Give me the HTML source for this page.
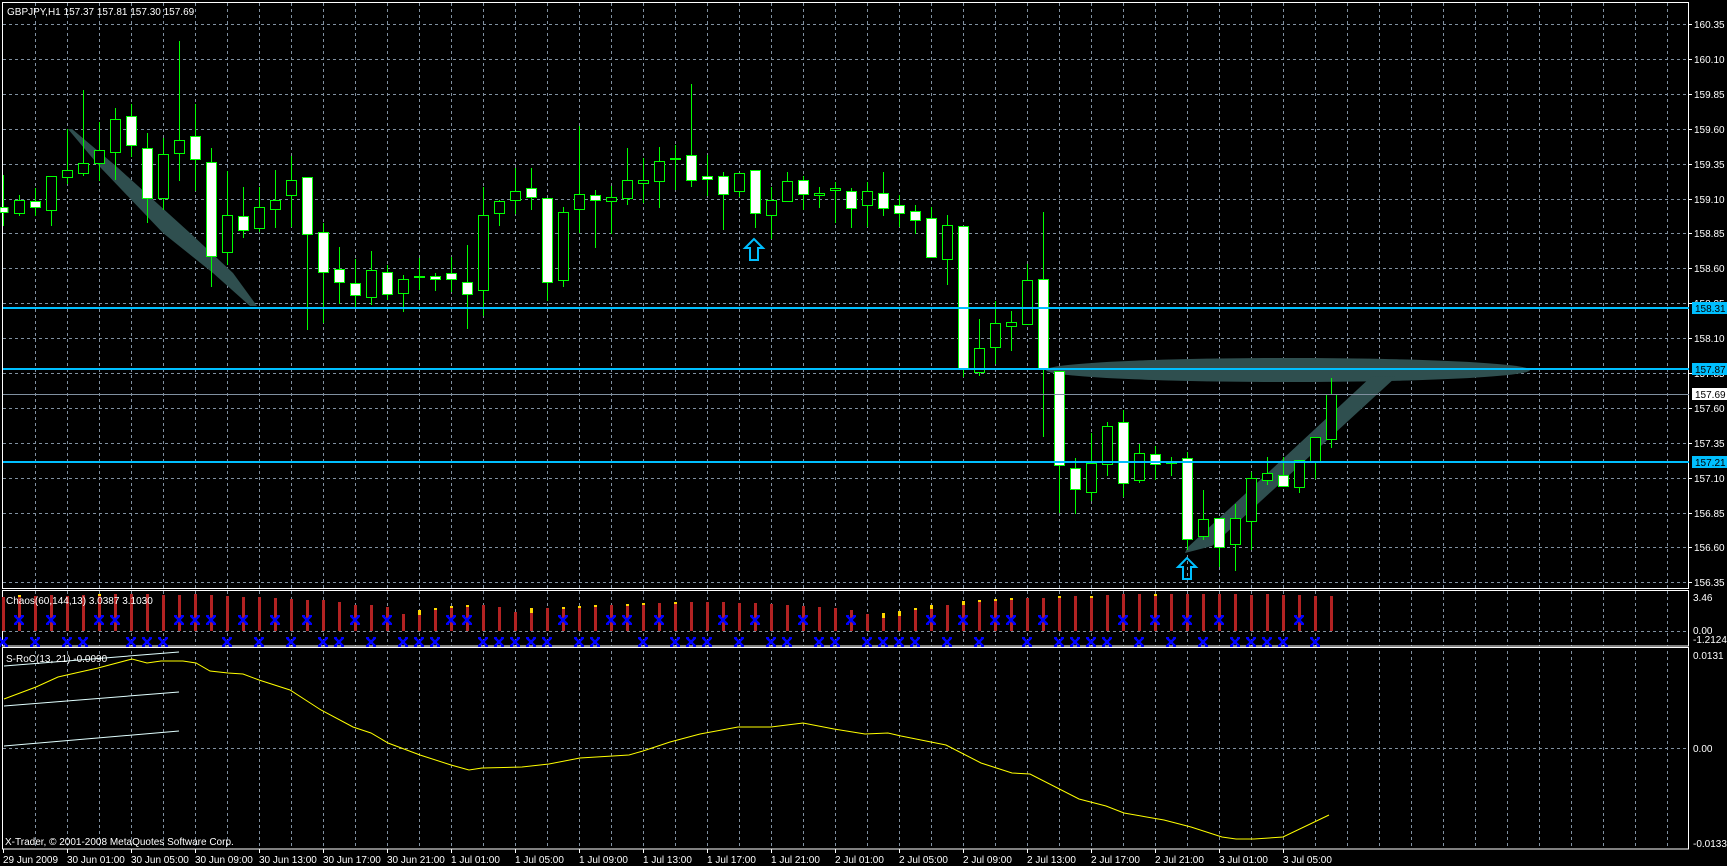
<!DOCTYPE html>
<html><head><meta charset="utf-8"><style>
html,body{margin:0;padding:0;background:#000;width:1727px;height:866px;overflow:hidden}
svg{display:block}
text{font-family:"Liberation Sans",sans-serif;font-size:10px;fill:#fff}
</style></head><body>
<svg width="1727" height="866" viewBox="0 0 1727 866" xmlns="http://www.w3.org/2000/svg" shape-rendering="crispEdges">
<defs>
<symbol id="bx" viewBox="-6 -5 12 10" overflow="visible">
<path d="M-4,-4L4,4M4,-4L-4,4M-5,-4h3M2,-4h3M-5,4h3M2,4h3" stroke="#0000ff" stroke-width="2.2" fill="none"/>
</symbol>
</defs>
<rect width="1727" height="866" fill="#000"/>
<g stroke="#8090a0" stroke-width="1" stroke-dasharray="3,3">
<path d="M35.5 3V849M67.5 3V849M99.5 3V849M131.5 3V849M163.5 3V849M195.5 3V849M227.5 3V849M259.5 3V849M291.5 3V849M323.5 3V849M355.5 3V849M387.5 3V849M419.5 3V849M451.5 3V849M483.5 3V849M515.5 3V849M547.5 3V849M579.5 3V849M611.5 3V849M643.5 3V849M675.5 3V849M707.5 3V849M739.5 3V849M771.5 3V849M803.5 3V849M835.5 3V849M867.5 3V849M899.5 3V849M931.5 3V849M963.5 3V849M995.5 3V849M1027.5 3V849M1059.5 3V849M1091.5 3V849M1123.5 3V849M1155.5 3V849M1187.5 3V849M1219.5 3V849M1251.5 3V849M1283.5 3V849M1315.5 3V849M1347.5 3V849M1379.5 3V849M1411.5 3V849M1443.5 3V849M1475.5 3V849M1507.5 3V849M1539.5 3V849M1571.5 3V849M1603.5 3V849M1635.5 3V849M1667.5 3V849"/>
<path d="M3 24.5H1689M3 59.5H1689M3 94.5H1689M3 129.5H1689M3 164.5H1689M3 199.5H1689M3 233.5H1689M3 268.5H1689M3 303.5H1689M3 338.5H1689M3 373.5H1689M3 408.5H1689M3 443.5H1689M3 478.5H1689M3 513.5H1689M3 547.5H1689M3 582.5H1689M3 631.5H1689M3 748.5H1689"/>
</g>
<rect x="1" y="589" width="1689" height="2" fill="#000"/>
<rect x="1" y="646" width="1689" height="2" fill="#000"/>
<g fill="none" stroke="#fff" stroke-width="1">
<rect x="2.5" y="2.5" width="1686" height="586"/>
<rect x="2.5" y="590.5" width="1686" height="55.5"/>
<rect x="2.5" y="647.5" width="1686" height="201.5"/>
</g>
<g fill="#2f4f4f" shape-rendering="auto">
<polygon points="68,129 100,167 163,233 213,273 250,306 257,306 233,273 190,233 117,167 72,129"/>
<ellipse cx="1288" cy="370" rx="242" ry="12"/>
<polygon points="1185,553 1212,546 1396,377 1372,376 1187,548"/>
</g>
<g stroke="#00ff00" stroke-width="1">
<path fill="none" d="M3.5 175V226M19.5 195V216M35.5 188V216M51.5 176V226M67.5 129V184M83.5 90V176M99.5 122V181M115.5 108V180M131.5 104V157M147.5 133V223M163.5 138V210M179.5 41V181M195.5 104V191M211.5 148V287M227.5 171V265M243.5 187V238M259.5 187V232M275.5 170V228M291.5 156V227M307.5 177V330M323.5 223V323M339.5 247V304M355.5 259V307M371.5 251V305M387.5 265V300M403.5 275V312M419.5 258V290M435.5 273V291M451.5 257V292M467.5 245V329M483.5 187V316M499.5 200V226M515.5 168V214M531.5 168V210M547.5 198V301M563.5 207V287M579.5 126V233M595.5 190V248M611.5 186V234M627.5 148V205M643.5 158V203M659.5 147V208M675.5 145V190M691.5 84V187M707.5 155V196M723.5 172V230M739.5 173V197M755.5 170V228M771.5 187V239M787.5 172V202M803.5 176V210M819.5 187V208M835.5 182V223M851.5 188V228M867.5 182V227M883.5 172V216M899.5 195V227M915.5 205V234M931.5 207V257M947.5 215V285M963.5 226V377M979.5 319V376M995.5 301V364M1011.5 311V351M1027.5 264V324M1043.5 212V437M1059.5 371V513M1075.5 458V514M1091.5 433V501M1107.5 422V476M1123.5 410V497M1139.5 444V483M1155.5 446V480M1171.5 457V476M1187.5 452V550M1203.5 490V540M1219.5 518V567M1235.5 504V571M1251.5 472V550M1267.5 457V485M1283.5 457V486M1299.5 460V493M1315.5 437V479M1331.5 378V448"/>
<g fill="#fff">
<rect x="0" y="207.5" width="8" height="5"/>
<rect x="30.5" y="201.5" width="10" height="6"/>
<rect x="126.5" y="116.5" width="10" height="29"/>
<rect x="142.5" y="148.5" width="10" height="50"/>
<rect x="190.5" y="136.5" width="10" height="23"/>
<rect x="206.5" y="162.5" width="10" height="94"/>
<rect x="238.5" y="216.5" width="10" height="14"/>
<rect x="302.5" y="177.5" width="10" height="57"/>
<rect x="318.5" y="232.5" width="10" height="40"/>
<rect x="334.5" y="269.5" width="10" height="13"/>
<rect x="350.5" y="283.5" width="10" height="12"/>
<rect x="382.5" y="272.5" width="10" height="22"/>
<rect x="430.5" y="276.5" width="10" height="3"/>
<rect x="446.5" y="273.5" width="10" height="6"/>
<rect x="462.5" y="282.5" width="10" height="12"/>
<rect x="526.5" y="188.5" width="10" height="9"/>
<rect x="542.5" y="198.5" width="10" height="84"/>
<rect x="590.5" y="195.5" width="10" height="5"/>
<rect x="686.5" y="155.5" width="10" height="25"/>
<rect x="702.5" y="176.5" width="10" height="3"/>
<rect x="718.5" y="176.5" width="10" height="18"/>
<rect x="750.5" y="170.5" width="10" height="43"/>
<rect x="798.5" y="180.5" width="10" height="14"/>
<rect x="846.5" y="191.5" width="10" height="17"/>
<rect x="878.5" y="193.5" width="10" height="15"/>
<rect x="894.5" y="205.5" width="10" height="8"/>
<rect x="910.5" y="211.5" width="10" height="9"/>
<rect x="926.5" y="218.5" width="10" height="39"/>
<rect x="958.5" y="226.5" width="10" height="142"/>
<rect x="1038.5" y="279.5" width="10" height="89"/>
<rect x="1054.5" y="371.5" width="10" height="94"/>
<rect x="1070.5" y="468.5" width="10" height="21"/>
<rect x="1118.5" y="422.5" width="10" height="61"/>
<rect x="1150.5" y="454.5" width="10" height="10"/>
<rect x="1182.5" y="458.5" width="10" height="81"/>
<rect x="1214.5" y="518.5" width="10" height="29"/>
<rect x="1278.5" y="475.5" width="10" height="11"/>
</g>
<g fill="#000">
<rect x="14.5" y="200.5" width="10" height="13"/>
<rect x="46.5" y="176.5" width="10" height="34"/>
<rect x="62.5" y="170.5" width="10" height="7"/>
<rect x="78.5" y="163.5" width="10" height="10"/>
<rect x="94.5" y="150.5" width="10" height="13"/>
<rect x="110.5" y="119.5" width="10" height="33"/>
<rect x="158.5" y="154.5" width="10" height="44"/>
<rect x="174.5" y="140.5" width="10" height="13"/>
<rect x="222.5" y="215.5" width="10" height="37"/>
<rect x="254.5" y="207.5" width="10" height="21"/>
<rect x="270.5" y="200.5" width="10" height="9"/>
<rect x="286.5" y="180.5" width="10" height="15"/>
<rect x="366.5" y="270.5" width="10" height="27"/>
<rect x="398.5" y="279.5" width="10" height="14"/>
<rect x="414.5" y="276.5" width="10" height="1"/>
<rect x="478.5" y="215.5" width="10" height="75"/>
<rect x="494.5" y="201.5" width="10" height="12"/>
<rect x="510.5" y="191.5" width="10" height="9"/>
<rect x="558.5" y="212.5" width="10" height="68"/>
<rect x="574.5" y="194.5" width="10" height="15"/>
<rect x="606.5" y="197.5" width="10" height="4"/>
<rect x="622.5" y="180.5" width="10" height="18"/>
<rect x="638.5" y="180.5" width="10" height="3"/>
<rect x="654.5" y="161.5" width="10" height="20"/>
<rect x="670.5" y="158.5" width="10" height="1"/>
<rect x="734.5" y="173.5" width="10" height="18"/>
<rect x="766.5" y="200.5" width="10" height="15"/>
<rect x="782.5" y="181.5" width="10" height="20"/>
<rect x="814.5" y="193.5" width="10" height="2"/>
<rect x="830.5" y="188.5" width="10" height="2"/>
<rect x="862.5" y="191.5" width="10" height="14"/>
<rect x="942.5" y="225.5" width="10" height="34"/>
<rect x="974.5" y="348.5" width="10" height="24"/>
<rect x="990.5" y="323.5" width="10" height="24"/>
<rect x="1006.5" y="322.5" width="10" height="4"/>
<rect x="1022.5" y="280.5" width="10" height="44"/>
<rect x="1086.5" y="463.5" width="10" height="29"/>
<rect x="1102.5" y="426.5" width="10" height="38"/>
<rect x="1134.5" y="453.5" width="10" height="27"/>
<rect x="1166.5" y="462.5" width="10" height="1"/>
<rect x="1198.5" y="519.5" width="10" height="17"/>
<rect x="1230.5" y="518.5" width="10" height="26"/>
<rect x="1246.5" y="478.5" width="10" height="43"/>
<rect x="1262.5" y="473.5" width="10" height="7"/>
<rect x="1294.5" y="460.5" width="10" height="27"/>
<rect x="1310.5" y="437.5" width="10" height="24"/>
<rect x="1326.5" y="394.5" width="10" height="45"/>
</g>
</g>
<rect x="3" y="307" width="1686" height="2" fill="#00bfff"/>
<rect x="3" y="368" width="1686" height="2" fill="#00bfff"/>
<rect x="3" y="461" width="1686" height="2" fill="#00bfff"/>
<rect x="3" y="394" width="1686" height="1" fill="#8090a0"/>
<g fill="none" stroke="#00bfff" stroke-width="2" shape-rendering="auto">
<path d="M754,239L745,248H750V260H758V248H763Z"/>
<path d="M1187,558L1178,567H1183V579H1191V567H1196Z"/>
</g>
<g stroke="#b22222" stroke-width="3">
<path d="M3.5 597V631M19.5 595V631M35.5 596V631M51.5 595V631M67.5 596V631M83.5 595V631M99.5 594V631M115.5 594V631M131.5 594V631M147.5 594V631M163.5 595V631M179.5 595V631M195.5 594V631M211.5 595V631M227.5 596V631M243.5 597V631M259.5 597V631M275.5 598V631M291.5 599V631M307.5 600V631M323.5 600V631M339.5 602V631M355.5 605V631M371.5 605V631M387.5 607V631M403.5 614V631M419.5 610V631M435.5 608V631M451.5 606V631M467.5 605V631M483.5 605V631M499.5 607V631M515.5 612V631M531.5 608V631M547.5 608V631M563.5 607V631M579.5 606V631M595.5 605V631M611.5 605V631M627.5 604V631M643.5 603V631M659.5 603V631M675.5 602V631M691.5 602V631M707.5 602V631M723.5 602V631M739.5 603V631M755.5 603V631M771.5 604V631M787.5 605V631M803.5 606V631M819.5 607V631M835.5 608V631M851.5 610V631M867.5 614V631M883.5 613V631M899.5 611V631M915.5 608V631M931.5 605V631M947.5 605V631M963.5 601V631M979.5 600V631M995.5 599V631M1011.5 598V631M1027.5 598V631M1043.5 598V631M1059.5 596V631M1075.5 596V631M1091.5 596V631M1107.5 595V631M1123.5 594V631M1139.5 594V631M1155.5 594V631M1171.5 594V631M1187.5 594V631M1203.5 594V631M1219.5 594V631M1235.5 594V631M1251.5 595V631M1267.5 594V631M1283.5 595V631M1299.5 595V631M1315.5 596V631M1331.5 596V631"/>
</g>
<g stroke="#ffd700" stroke-width="3">
<path d="M19.5 595V597M99.5 594V596M419.5 610V615M435.5 608V610M451.5 606V608M467.5 605V607M531.5 608V613M563.5 607V609M579.5 606V608M595.5 605V607M627.5 604V606M643.5 603V605M675.5 602V604M883.5 613V618M899.5 611V616M915.5 608V610M931.5 605V609M963.5 601V605M979.5 600V602M995.5 599V601M1011.5 598V600M1059.5 596V598M1091.5 596V598M1155.5 594V596"/>
</g>
<g>
<use href="#bx" x="13" y="615" width="12" height="10"/><use href="#bx" x="45" y="615" width="12" height="10"/><use href="#bx" x="93" y="615" width="12" height="10"/><use href="#bx" x="109" y="615" width="12" height="10"/><use href="#bx" x="173" y="615" width="12" height="10"/><use href="#bx" x="189" y="615" width="12" height="10"/><use href="#bx" x="205" y="615" width="12" height="10"/><use href="#bx" x="237" y="615" width="12" height="10"/><use href="#bx" x="269" y="615" width="12" height="10"/><use href="#bx" x="301" y="615" width="12" height="10"/><use href="#bx" x="349" y="615" width="12" height="10"/><use href="#bx" x="381" y="615" width="12" height="10"/><use href="#bx" x="445" y="615" width="12" height="10"/><use href="#bx" x="461" y="615" width="12" height="10"/><use href="#bx" x="557" y="615" width="12" height="10"/><use href="#bx" x="605" y="615" width="12" height="10"/><use href="#bx" x="621" y="615" width="12" height="10"/><use href="#bx" x="653" y="615" width="12" height="10"/><use href="#bx" x="717" y="615" width="12" height="10"/><use href="#bx" x="749" y="615" width="12" height="10"/><use href="#bx" x="797" y="615" width="12" height="10"/><use href="#bx" x="845" y="615" width="12" height="10"/><use href="#bx" x="925" y="615" width="12" height="10"/><use href="#bx" x="957" y="615" width="12" height="10"/><use href="#bx" x="989" y="615" width="12" height="10"/><use href="#bx" x="1005" y="615" width="12" height="10"/><use href="#bx" x="1037" y="615" width="12" height="10"/><use href="#bx" x="1117" y="615" width="12" height="10"/><use href="#bx" x="1149" y="615" width="12" height="10"/><use href="#bx" x="1181" y="615" width="12" height="10"/><use href="#bx" x="1213" y="615" width="12" height="10"/><use href="#bx" x="1293" y="615" width="12" height="10"/>
</g>
<g>
<use href="#bx" x="-3" y="637" width="12" height="10"/><use href="#bx" x="29" y="637" width="12" height="10"/><use href="#bx" x="61" y="637" width="12" height="10"/><use href="#bx" x="77" y="637" width="12" height="10"/><use href="#bx" x="125" y="637" width="12" height="10"/><use href="#bx" x="141" y="637" width="12" height="10"/><use href="#bx" x="157" y="637" width="12" height="10"/><use href="#bx" x="221" y="637" width="12" height="10"/><use href="#bx" x="253" y="637" width="12" height="10"/><use href="#bx" x="285" y="637" width="12" height="10"/><use href="#bx" x="317" y="637" width="12" height="10"/><use href="#bx" x="333" y="637" width="12" height="10"/><use href="#bx" x="365" y="637" width="12" height="10"/><use href="#bx" x="397" y="637" width="12" height="10"/><use href="#bx" x="413" y="637" width="12" height="10"/><use href="#bx" x="429" y="637" width="12" height="10"/><use href="#bx" x="477" y="637" width="12" height="10"/><use href="#bx" x="493" y="637" width="12" height="10"/><use href="#bx" x="509" y="637" width="12" height="10"/><use href="#bx" x="525" y="637" width="12" height="10"/><use href="#bx" x="541" y="637" width="12" height="10"/><use href="#bx" x="573" y="637" width="12" height="10"/><use href="#bx" x="589" y="637" width="12" height="10"/><use href="#bx" x="637" y="637" width="12" height="10"/><use href="#bx" x="669" y="637" width="12" height="10"/><use href="#bx" x="685" y="637" width="12" height="10"/><use href="#bx" x="701" y="637" width="12" height="10"/><use href="#bx" x="733" y="637" width="12" height="10"/><use href="#bx" x="765" y="637" width="12" height="10"/><use href="#bx" x="781" y="637" width="12" height="10"/><use href="#bx" x="813" y="637" width="12" height="10"/><use href="#bx" x="829" y="637" width="12" height="10"/><use href="#bx" x="861" y="637" width="12" height="10"/><use href="#bx" x="877" y="637" width="12" height="10"/><use href="#bx" x="893" y="637" width="12" height="10"/><use href="#bx" x="909" y="637" width="12" height="10"/><use href="#bx" x="941" y="637" width="12" height="10"/><use href="#bx" x="973" y="637" width="12" height="10"/><use href="#bx" x="1021" y="637" width="12" height="10"/><use href="#bx" x="1053" y="637" width="12" height="10"/><use href="#bx" x="1069" y="637" width="12" height="10"/><use href="#bx" x="1085" y="637" width="12" height="10"/><use href="#bx" x="1101" y="637" width="12" height="10"/><use href="#bx" x="1133" y="637" width="12" height="10"/><use href="#bx" x="1165" y="637" width="12" height="10"/><use href="#bx" x="1197" y="637" width="12" height="10"/><use href="#bx" x="1229" y="637" width="12" height="10"/><use href="#bx" x="1245" y="637" width="12" height="10"/><use href="#bx" x="1261" y="637" width="12" height="10"/><use href="#bx" x="1277" y="637" width="12" height="10"/><use href="#bx" x="1309" y="637" width="12" height="10"/>
</g>
<g fill="none" shape-rendering="auto">
<path stroke="#e0ffff" stroke-width="1" d="M4,666L179,652M4,706L179,692M4,746L179,731"/>
<path stroke="#ffff00" stroke-width="1" d="M4,699L36,687L58,677L80,672L98,668L132,659L147,663L161,661L183,661L196,663L210,671L228,673L243,674L259,680L290,690L321,710L353,727L371,733L388,743L420,755L451,765L469,770L482,768L522,767L549,764L580,758L629,755L643,751L670,742L700,734L738,727L771,727L803,723L834,729L865,734L888,733L901,736L946,745L981,763L1012,773L1030,774L1079,799L1106,806L1124,813L1164,820L1191,827L1222,837L1236,839L1254,839L1283,837L1329,815"/>
</g>
<text x="7" y="15">GBPJPY,H1  157.37 157.81 157.30 157.69</text>
<text x="6" y="604">Chaos(60,144,13) 3.0387 3.1030</text>
<text x="6" y="662">S-RoC(13, 21) -0.0090</text>
<text x="5" y="845">X-Trader, © 2001-2008 MetaQuotes Software Corp.</text>
<path stroke="#fff" d="M1689 24.5h3M1689 59.5h3M1689 94.5h3M1689 129.5h3M1689 164.5h3M1689 199.5h3M1689 233.5h3M1689 268.5h3M1689 303.5h3M1689 338.5h3M1689 373.5h3M1689 408.5h3M1689 443.5h3M1689 478.5h3M1689 513.5h3M1689 547.5h3M1689 582.5h3"/>
<g>
<text x="1694" y="28">160.35</text><text x="1694" y="63">160.10</text><text x="1694" y="98">159.85</text><text x="1694" y="133">159.60</text><text x="1694" y="168">159.35</text><text x="1694" y="203">159.10</text><text x="1694" y="237">158.85</text><text x="1694" y="272">158.60</text><text x="1694" y="307">158.35</text><text x="1694" y="342">158.10</text><text x="1694" y="377">157.85</text><text x="1694" y="412">157.60</text><text x="1694" y="447">157.35</text><text x="1694" y="482">157.10</text><text x="1694" y="517">156.85</text><text x="1694" y="551">156.60</text><text x="1694" y="586">156.35</text>
</g>
<rect x="1692" y="302" width="35" height="12" fill="#00bfff"/><text x="1695" y="312" style="fill:#000">158.31</text>
<rect x="1692" y="363" width="35" height="12" fill="#00bfff"/><text x="1695" y="373" style="fill:#000">157.87</text>
<rect x="1692" y="456" width="35" height="12" fill="#00bfff"/><text x="1695" y="466" style="fill:#000">157.21</text>
<rect x="1692" y="388" width="35" height="12" fill="#fff"/><text x="1695" y="398" style="fill:#000">157.69</text>
<text x="1693" y="601">3.46</text>
<text x="1693" y="634">0.00</text>
<text x="1693" y="643">-1.2124</text>
<text x="1693" y="659">0.0131</text>
<text x="1693" y="752">0.00</text>
<text x="1693" y="847">-0.0133</text>
<path stroke="#fff" d="M3.5 849v4M67.5 849v4M131.5 849v4M195.5 849v4M259.5 849v4M323.5 849v4M387.5 849v4M451.5 849v4M515.5 849v4M579.5 849v4M643.5 849v4M707.5 849v4M771.5 849v4M835.5 849v4M899.5 849v4M963.5 849v4M1027.5 849v4M1091.5 849v4M1155.5 849v4M1219.5 849v4M1283.5 849v4"/>
<g>
<text x="3" y="863">29 Jun 2009</text><text x="67" y="863">30 Jun 01:00</text><text x="131" y="863">30 Jun 05:00</text><text x="195" y="863">30 Jun 09:00</text><text x="259" y="863">30 Jun 13:00</text><text x="323" y="863">30 Jun 17:00</text><text x="387" y="863">30 Jun 21:00</text><text x="451" y="863">1 Jul 01:00</text><text x="515" y="863">1 Jul 05:00</text><text x="579" y="863">1 Jul 09:00</text><text x="643" y="863">1 Jul 13:00</text><text x="707" y="863">1 Jul 17:00</text><text x="771" y="863">1 Jul 21:00</text><text x="835" y="863">2 Jul 01:00</text><text x="899" y="863">2 Jul 05:00</text><text x="963" y="863">2 Jul 09:00</text><text x="1027" y="863">2 Jul 13:00</text><text x="1091" y="863">2 Jul 17:00</text><text x="1155" y="863">2 Jul 21:00</text><text x="1219" y="863">3 Jul 01:00</text><text x="1283" y="863">3 Jul 05:00</text>
</g>
</svg>
</body></html>
